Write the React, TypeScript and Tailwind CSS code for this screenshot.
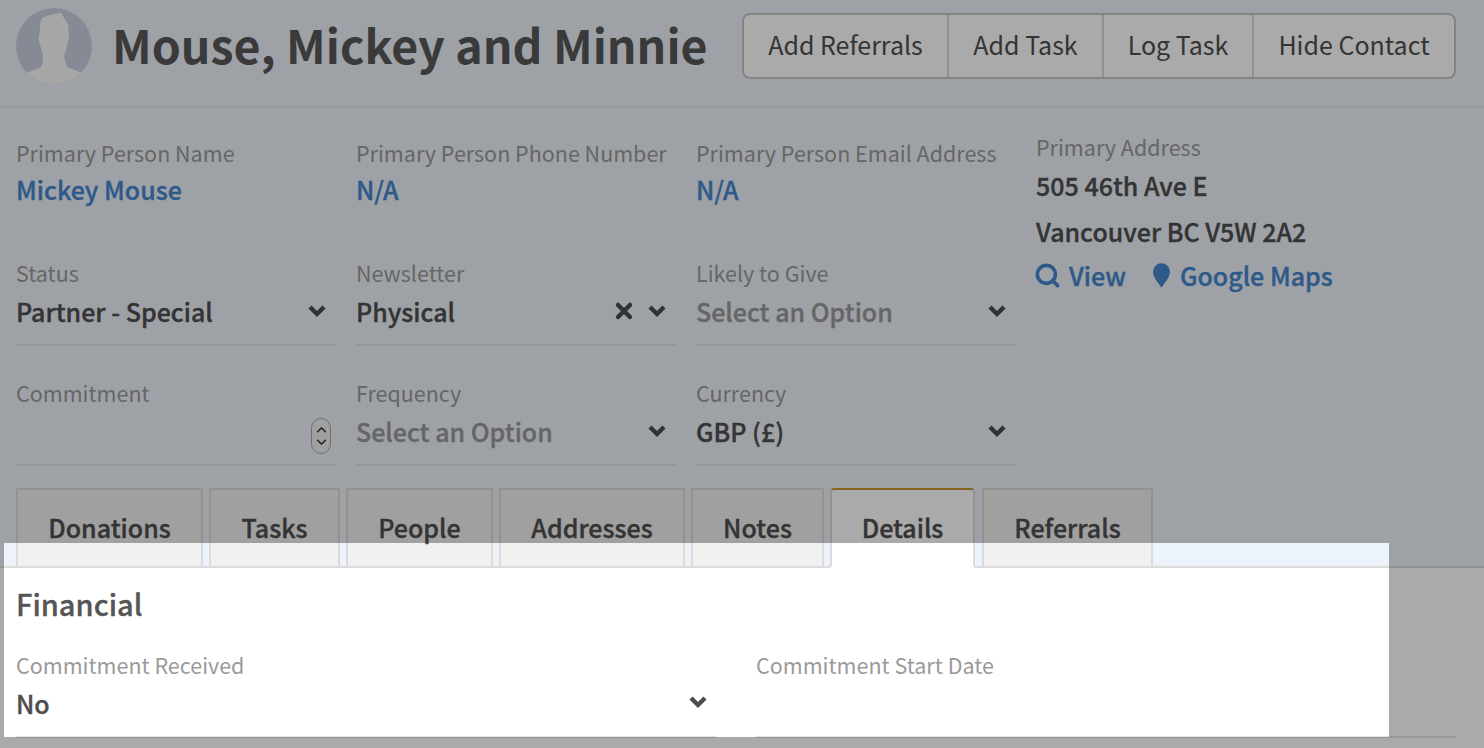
import { Search, X } from "lucide-react";

const FONT = "font-['Noto_Sans_CJK_SC','Noto_Sans',sans-serif]";
const VALUE = "text-[25px] leading-[30px] font-medium [-webkit-text-stroke:0.35px]";

const ACTIONS = [
  { label: "Add Referrals", width: "w-[203px]" },
  { label: "Add Task", width: "w-[155px]" },
  { label: "Log Task", width: "w-[150px]" },
  { label: "Hide Contact", width: "w-[202px]" },
];

const TABS = [
  { label: "Donations", width: "w-[187px]" },
  { label: "Tasks", width: "w-[131px]" },
  { label: "People", width: "w-[147px]" },
  { label: "Addresses", width: "w-[186px]" },
  { label: "Notes", width: "w-[133px]" },
  { label: "Details", width: "w-[145px]", active: true },
  { label: "Referrals", width: "w-[171px] ml-px" },
];

function Chevron() {
  return (
    <svg viewBox="0 0 18 14" className="w-[18px] h-[14px]" fill="none" stroke="#4c4c4c" strokeWidth="4.4">
      <path d="M2 3l7 7 7-7" />
    </svg>
  );
}

function Avatar() {
  return (
    <svg viewBox="0 0 76 76" className="w-[76px] h-[76px] shrink-0">
      <defs>
        <clipPath id="avatar-clip">
          <circle cx="38" cy="38" r="38" />
        </clipPath>
      </defs>
      <g clipPath="url(#avatar-clip)">
        <rect width="76" height="76" fill="#c8cfe0" />
        <path
          d="M45 4.7L34 7C29 8 25.500 10 24.700 12.700L23 28.700L22.300 31.300L26.700 45.300L26.700 55.300L24 60L10.700 64.700L0 76H76L65 64.700L50.700 58.700L48 48.700L53 30.300L52.300 17L47.300 8.700z"
          fill="#fbfbfb"
        />
      </g>
    </svg>
  );
}

function Field({ label, value, muted, link, clear, spinner }: {
  label: string;
  value?: string;
  muted?: boolean;
  link?: boolean;
  clear?: boolean;
  spinner?: boolean;
}) {
  return (
    <div className="w-[320px]">
      <div className="h-[30px] text-[21.5px] leading-[30px] text-[#9a9a9a] whitespace-nowrap">{label}</div>
      <div className={`h-[30px] flex items-center justify-between ${link ? "mt-[6px]" : "mt-[8px]"}`}>
        <span className={`${VALUE} ${link ? "text-[#4686cc]" : muted ? "text-[#9a9a9a]" : "text-[#4e4e4e]"}`}>
          {value}
        </span>
        {spinner && (
          <span className="flex flex-col items-center justify-center gap-[6px] w-[20px] h-[36px] mr-[5px] mt-[10px] rounded-full border border-[#aaaaaa] bg-[#f1f1f1]">
            <svg viewBox="0 0 12 7" className="w-[11px] h-[6px]" fill="none" stroke="#444" strokeWidth="1.8"><path d="M1 6l5-5 5 5" /></svg>
            <svg viewBox="0 0 12 7" className="w-[11px] h-[6px]" fill="none" stroke="#444" strokeWidth="1.8"><path d="M1 1l5 5 5-5" /></svg>
          </span>
        )}
        {!link && !spinner && (
          <span className="flex items-center gap-[12px] mr-[10px] -mt-[1px]">
            {clear && <X size={24} strokeWidth={4.5} color="#4c4c4c" />}
            <Chevron />
          </span>
        )}
      </div>
      {link ? <div className="h-[22px]" /> : <div className="h-[20px] border-b-2 border-[#e3e3e3]" />}
    </div>
  );
}

export default function App() {
  return (
    <div className={`${FONT} relative w-[1484px] h-[748px] overflow-hidden bg-white`}>
      <div className="bg-[#edf3fb]">
        {/* Header */}
        <div className="h-[108px] flex items-start border-b-2 border-[#e3e7ec] pl-[16px]">
          <div className="mt-[8px]">
            <Avatar />
          </div>
          <h1 className="ml-[20px] mt-[14px] text-[46.500px] leading-[60px] font-bold text-[#575757] whitespace-nowrap">
            Mouse, Mickey and Minnie
          </h1>
          <div className="ml-auto mr-[28px] mt-[13px] flex h-[66px] rounded-[8px] border-2 border-[#c5c5c5] bg-white overflow-hidden">
            {ACTIONS.map((a, i) => (
              <div
                key={a.label}
                className={`${a.width} pb-[2px] flex items-center justify-center text-[25px] text-[#4e4e4e] whitespace-nowrap ${i > 0 ? "border-l-2 border-[#d8d8d8]" : ""}`}
              >
                {a.label}
              </div>
            ))}
          </div>
        </div>

        {/* Contact summary */}
        <div className="pl-[16px] pt-[30px] grid grid-cols-[320px_320px_320px_420px] gap-x-[20px] gap-y-[32px]">
          <Field label="Primary Person Name" value="Mickey Mouse" link />
          <Field label="Primary Person Phone Number" value="N/A" link />
          <Field label="Primary Person Email Address" value="N/A" link />
          <div className="row-span-3 -mt-[6px]">
            <div className="h-[30px] text-[21.5px] leading-[30px] text-[#9a9a9a]">Primary Address</div>
            <div className={`mt-[8px] ${VALUE} text-[#4e4e4e]`}>505 46th Ave E</div>
            <div className={`mt-[16px] ${VALUE} text-[#4e4e4e]`}>Vancouver BC V5W 2A2</div>
            <div className={`mt-[14px] flex items-center ${VALUE} text-[#4686cc]`}>
              <Search size={27} strokeWidth={3.2} className="-ml-[2px]" />
              <span className="ml-[8px]">View</span>
              <svg viewBox="0 0 18 26" className="ml-[27px] w-[17px] h-[25px]" fill="#4686cc">
                <path d="M9 0a9 9 0 0 1 9 9c0 6-6 12-9 17-3-5-9-11-9-17a9 9 0 0 1 9-9z" />
              </svg>
              <span className="ml-[10px]">Google Maps</span>
            </div>
          </div>
          <Field label="Status" value="Partner - Special" />
          <Field label="Newsletter" value="Physical" clear />
          <Field label="Likely to Give" value="Select an Option" muted />
          <Field label="Commitment" spinner />
          <Field label="Frequency" value="Select an Option" muted />
          <Field label="Currency" value="GBP (£)" />
        </div>

        {/* Tabs */}
        <div className="mt-[22px] pl-[16px] h-[80px] flex items-start gap-[6px] border-b-2 border-[#dcdcdc]">
          {TABS.map(t => (
            <div
              key={t.label}
              className={`${t.width} h-[80px] pt-[20px] text-center ${VALUE} leading-[34px] text-[#4e4e4e] border-2 ${
                t.active
                  ? "bg-white border-[#dcdcdc] border-t-[#c9962f] border-b-white rounded-t-[4px]"
                  : "bg-[#f1f1f1] border-[#dcdcdc]"
              }`}
            >
              {t.label}
            </div>
          ))}
        </div>
      </div>

      {/* Details panel */}
      <div className="pl-[16px] pt-[17px]">
        <h2 className="text-[29px] leading-[36px] font-medium [-webkit-text-stroke:0.35px] text-[#555555]">Financial</h2>
        <div className="mt-[29px] grid grid-cols-[700px_700px] gap-x-[40px]">
          <div>
            <div className="h-[30px] text-[21.5px] leading-[30px] text-[#9a9a9a]">Commitment Received</div>
            <div className="mt-[8px] h-[30px] flex items-center justify-between pr-[9px]">
              <span className={`${VALUE} text-[#4e4e4e]`}>No</span>
              <span className="-mt-[3px]"><Chevron /></span>
            </div>
            <div className="h-[20px] border-b-2 border-[#e3e3e3]" />
          </div>
          <div>
            <div className="h-[30px] text-[21.5px] leading-[30px] text-[#9a9a9a]">Commitment Start Date</div>
            <div className="mt-[8px] h-[30px]" />
            <div className="h-[20px] border-b-2 border-[#e3e3e3]" />
          </div>
        </div>
      </div>

      {/* Tour spotlight */}
      <div className="absolute left-[4px] top-[543px] w-[1385px] h-[194px] shadow-[0_0_0_2000px_rgba(0,0,0,0.333)]" />
    </div>
  );
}
